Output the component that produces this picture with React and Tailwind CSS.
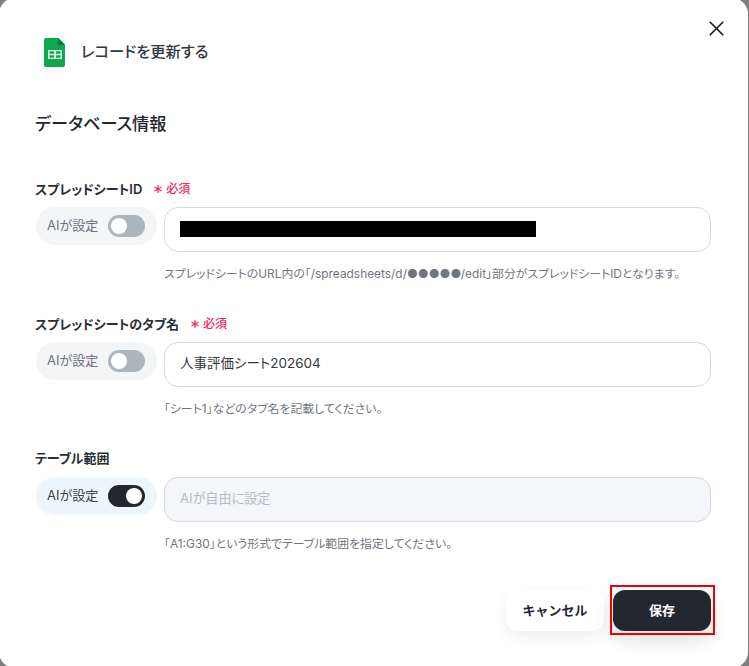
import React from "react";
import { X } from "lucide-react";

const FONT = "font-['Inter','Noto_Sans_CJK_JP',sans-serif] [font-feature-settings:'palt']";

function Toggle({ on }) {
  return (
    <span className={`flex h-[22px] w-[37px] items-center rounded-full px-[3px] ${on ? "justify-end bg-[#23272f]" : "justify-start bg-[#adb5bd]"}`}>
      <span className="h-[16px] w-[16px] rounded-full bg-white" />
    </span>
  );
}

function Field({ label, required, on, value, placeholder, redacted, hint, labelClass = "" }) {
  return (
    <div className="flex flex-col">
      <div className={`flex h-[20px] items-center gap-[12px] ${labelClass}`}>
        <span className="text-[13px] font-semibold leading-5 text-[#2a2f36]">{label}</span>
        {required && (
          <span className="flex items-center gap-[4px] text-[12px] font-medium leading-5 text-[#f5265f]">
            <svg width="8" height="8" viewBox="0 0 8 8" aria-hidden="true" stroke="#f5265f" strokeWidth="1.2">
              <path d="M4 0v8M.5 2l7 4M7.5 2l-7 4" fill="none" />
            </svg>
            <span>必須</span>
          </span>
        )}
      </div>
      <div className="mt-[8px] flex items-start gap-[7px]">
        <div className={`ml-px flex h-[38px] w-[121px] items-center gap-[9px] rounded-full pl-[11px] ${on ? "bg-[#eef6fd]" : "bg-[#f3f5f7]"}`}>
          <span className={`w-[52px] pb-[2px] text-[13px] leading-none ${on ? "text-[#3d434b]" : "text-[#6b737c]"}`}>AIが設定</span>
          <Toggle on={on} />
        </div>
        <div className={`flex h-[45px] w-[547px] items-center rounded-[14px] border border-[#d3d9e2] px-[15px] pb-[2px] text-[13.5px] ${on ? "bg-[#f4f6f9]" : "bg-white"}`}>
          {redacted && <div className="h-[16px] w-[356px] bg-black" />}
          {value && <span className="-mt-px text-[#343a40]">{value}</span>}
          {placeholder && <span className="text-[13.1px] text-[#b4bbc4]">{placeholder}</span>}
        </div>
      </div>
      <p className="ml-[129px] mt-[14px] text-[11.9px] leading-[16px] text-[#6f767e]">{hint}</p>
    </div>
  );
}

export default function App() {
  return (
    <div className={`h-[666px] w-[749px] overflow-hidden bg-[#7f7f7f] ${FONT}`}>
      <div className="relative -ml-px -mt-[2px] flex h-[670px] w-[749px] flex-col rounded-[16px] bg-white pl-[36px] pr-[37px]">
        <button className="absolute right-[19px] top-[18px] text-[#16191d]">
          <X size={25} strokeWidth={1.6} />
        </button>

        <div className="ml-[9px] mt-[40px] flex h-[29px] items-center gap-[16px]">
          <svg width="21" height="29" viewBox="0 0 21 29" aria-hidden="true">
            <path d="M2 0h12.5L21 6.5V27a2 2 0 0 1-2 2H2a2 2 0 0 1-2-2V2a2 2 0 0 1 2-2z" fill="#0ea84f" />
            <path d="M14 0l7 7h-5.5A1.5 1.5 0 0 1 14 5.5z" fill="#0b7d3c" />
            <path d="M4 12h14v9H4z" fill="#dff5e6" />
            <path d="M5.5 13.3h4.6v2.5H5.5zM11.9 13.3h4.6v2.5h-4.6zM5.5 17.3h4.6v2.5H5.5zM11.9 17.3h4.6v2.5h-4.6z" fill="#0ea84f" />
          </svg>
          <span className="text-[15.3px] font-medium text-[#33383f]">レコードを更新する</span>
        </div>

        <h2 className="mt-[45px] text-[17.2px] font-medium leading-6 text-[#23272f]">データベース情報</h2>

        <div className="mt-[43px]">
          <Field
            label="スプレッドシートID"
            required
            redacted
            hint="スプレッドシートのURL内の「/spreadsheets/d/●●●●●/edit」部分がスプレッドシートIDとなります。"
          />
        </div>
        <div className="mt-[32px]">
          <Field
            label="スプレッドシートのタブ名"
            required
            value="人事評価シート202604"
            hint="「シート1」などのタブ名を記載してください。"
          />
        </div>
        <div className="mt-[32px]">
          <Field
            label="テーブル範囲"
            labelClass="-mt-px mb-px"
            on
            placeholder="AIが自由に設定"
            hint="「A1:G30」という形式でテーブル範囲を指定してください。"
          />
        </div>

        <div className="mt-[38px] flex justify-end gap-[9px]">
          <button className="h-[41px] w-[98px] rounded-[12px] bg-white pt-px text-[13px] font-semibold text-[#23272f] shadow-[0_6px_16px_rgba(0,0,0,0.07)] [font-feature-settings:normal]">
            キャンセル
          </button>
          <div className="relative">
            <button className="h-[41px] w-[98px] rounded-[12px] bg-[#23272f] pt-px text-[13px] font-semibold text-white shadow-[0_8px_20px_rgba(0,0,0,0.14)] [font-feature-settings:normal]">
              保存
            </button>
            <div className="absolute -bottom-[4px] -left-[3px] -right-[4px] -top-[5px] border-2 border-[#f00000]" />
          </div>
        </div>
      </div>
    </div>
  );
}
